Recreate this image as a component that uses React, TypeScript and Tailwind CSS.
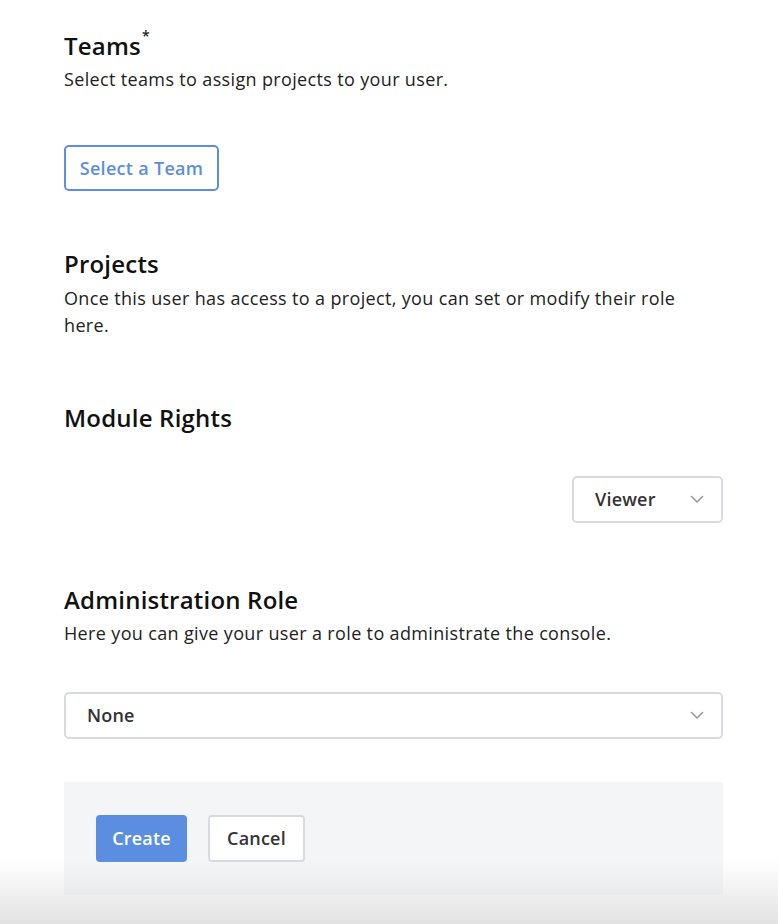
function SectionHeading({ children }: { children: React.ReactNode }) {
  return (
    <h2 className="text-[24px] font-semibold leading-[30px] tracking-[0.2px] text-[#111]">{children}</h2>
  );
}

function Chevron() {
  return (
    <svg width="14" height="9" viewBox="0 0 14 9" fill="none" className="text-[#999]">
      <path d="M1.5 1.5 7 7l5.5-5.5" stroke="currentColor" strokeWidth="1.6" strokeLinecap="round" strokeLinejoin="round" />
    </svg>
  );
}

function Dropdown({ value, className }: { value: string; className?: string }) {
  return (
    <div
      className={`flex h-[47px] items-center justify-between rounded-[5px] border-2 border-[#d7dae2] bg-white pl-[21px] pr-[17px] ${className ?? ''}`}
    >
      <span className="text-[18px] font-semibold tracking-[0.2px] text-[#333]">{value}</span>
      <Chevron />
    </div>
  );
}

export default function App() {
  return (
    <div className="relative min-h-[924px] bg-white font-['Open_Sans',sans-serif] text-[#222]">
      <div className="mx-[64px] w-[659px] pt-[31px]">
        {/* Teams */}
        <div className="flex items-start">
          <SectionHeading>Teams</SectionHeading>
          <span className="-mt-[6px] ml-[1px] text-[14px] font-semibold">*</span>
        </div>
        <p className="mt-[5px] text-[18px] leading-[27px] tracking-[0.35px]">
          Select teams to assign projects to your user.
        </p>
        <button className="mt-[52px] h-[46px] w-[155px] rounded-[5px] border-2 border-[#5b8ee0] text-[18px] font-semibold tracking-[0.3px] text-[#5b8ee0]">
          Select a Team
        </button>

        {/* Projects */}
        <div className="mt-[58px]">
          <SectionHeading>Projects</SectionHeading>
          <p className="mt-[6px] text-[18px] leading-[27px] tracking-[0.35px]">
            Once this user has access to a project, you can set or modify their role here.
          </p>
        </div>

        {/* Module Rights */}
        <div className="mt-[64px]">
          <SectionHeading>Module Rights</SectionHeading>
          <div className="mt-[43px] flex justify-end">
            <Dropdown value="Viewer" className="w-[151px]" />
          </div>
        </div>

        {/* Administration Role */}
        <div className="mt-[62px]">
          <SectionHeading>Administration Role</SectionHeading>
          <p className="mt-[5px] text-[18px] leading-[27px] tracking-[0.35px]">
            Here you can give your user a role to administrate the console.
          </p>
          <Dropdown value="None" className="mt-[45px] w-full" />
        </div>

        {/* Actions */}
        <div className="mt-[43px] flex h-[113px] items-center gap-[21px] bg-[#f4f5f7] px-[32px]">
          <button className="h-[47px] w-[91px] rounded-[4px] bg-[#5b8ee0] text-[18px] font-semibold tracking-[0.2px] text-white">
            Create
          </button>
          <button className="h-[47px] w-[97px] rounded-[4px] border-2 border-[#d7dae2] bg-white text-[18px] font-semibold tracking-[0.2px] text-[#333]">
            Cancel
          </button>
        </div>
      </div>
      <div className="pointer-events-none absolute bottom-0 left-0 h-[64px] w-full bg-gradient-to-b from-transparent to-[#e2e2e2]" />
    </div>
  );
}
